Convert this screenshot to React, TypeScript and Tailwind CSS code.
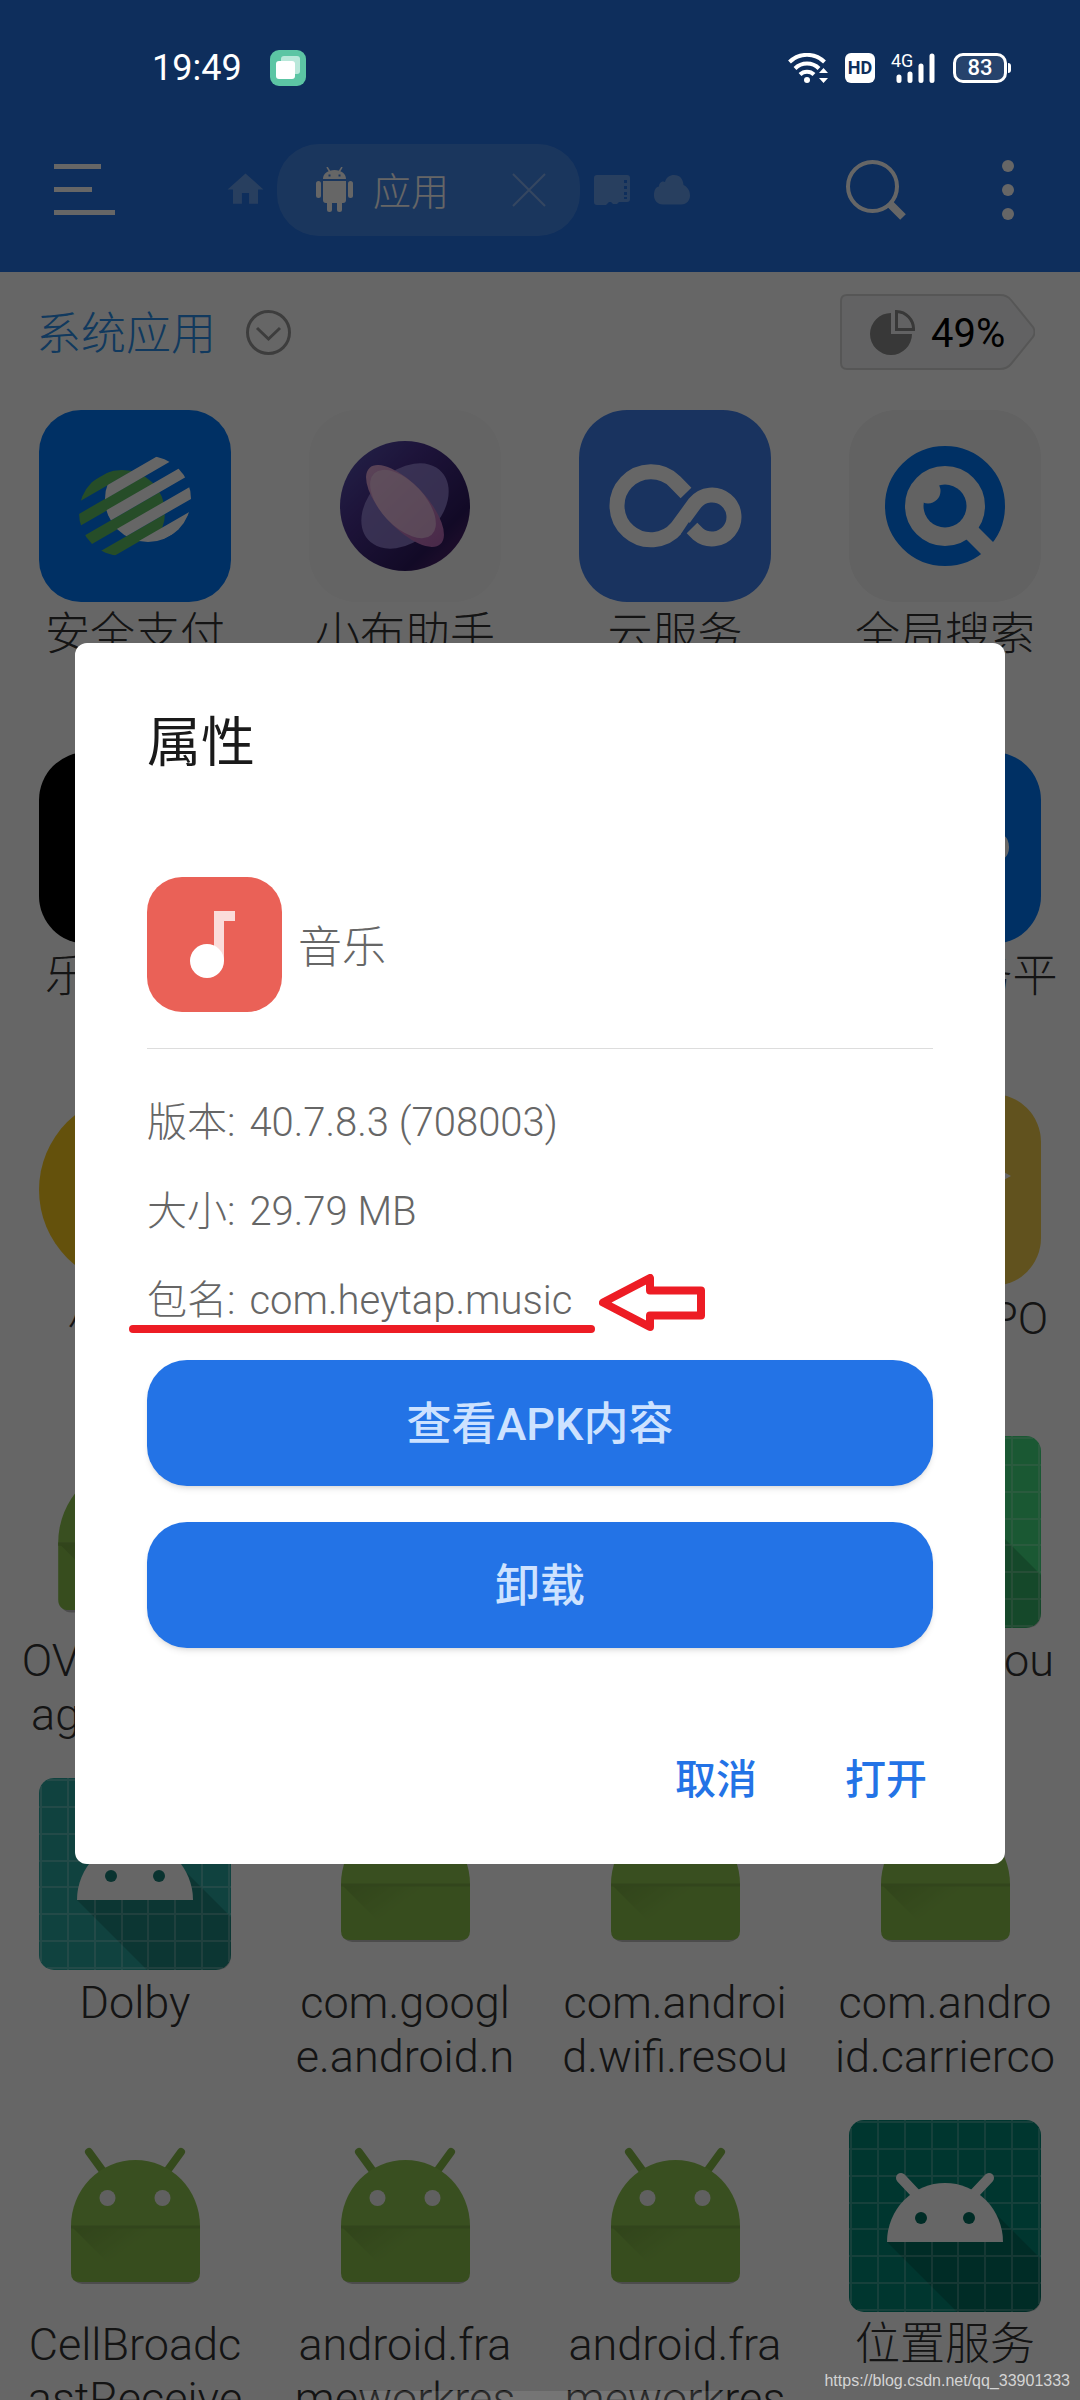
import React from 'react';
import { MdHome } from 'react-icons/md';

type TileProps = {
  name: string;
  icon: React.ReactNode;
};

const PayIcon: React.FC = () => (
  <svg viewBox="0 0 192 192" className="size-full">
    <clipPath id="pay-green"><circle cx="83" cy="103" r="43" /></clipPath>
    <clipPath id="pay-white"><circle cx="109" cy="89" r="43" /></clipPath>
    <rect width="192" height="192" rx="42" fill="#0078fa" />
    <g clipPath="url(#pay-green)">
      <g transform="rotate(-30)" stroke="#60c065" strokeWidth="11">
        <path d="M-60 94H62M-60 115.500H140M-60 137H140M-60 158.500H140" />
      </g>
    </g>
    <g clipPath="url(#pay-white)">
      <g transform="rotate(-30)" stroke="#fff" strokeWidth="11">
        <path d="M-60 104.700H140M-60 126H140M-60 147.500H140M20 169H140" />
      </g>
    </g>
  </svg>
);

const AssistantIcon: React.FC = () => (
  <svg viewBox="0 0 192 192" className="size-full">
    <defs>
      <linearGradient id="orb" x1="0" y1="0" x2="1" y2="1">
        <stop offset="0" stopColor="#5a58b8" />
        <stop offset="0.35" stopColor="#4a3290" />
        <stop offset="0.75" stopColor="#2e1a60" />
        <stop offset="1" stopColor="#6a2a78" />
      </linearGradient>
      <linearGradient id="petal" x1="0" y1="0" x2="1" y2="0">
        <stop offset="0" stopColor="#e0a8d8" />
        <stop offset="1" stopColor="#b868b8" />
      </linearGradient>
    </defs>
    <rect width="192" height="192" rx="48" fill="#f9f9f9" />
    <circle cx="96" cy="96" r="65" fill="url(#orb)" />
    <ellipse cx="96" cy="96" rx="50" ry="35" transform="rotate(-43 96 96)" fill="#a493e6" fillOpacity="0.75" />
    <ellipse cx="96" cy="96" rx="52" ry="22" transform="rotate(47 96 96)" fill="url(#petal)" />
    <ellipse cx="94" cy="94" rx="42" ry="22" transform="rotate(47 94 94)" fill="#f4d2ec" fillOpacity="0.65" />
  </svg>
);

const CloudServiceIcon: React.FC = () => (
  <svg viewBox="0 0 192 192" className="size-full">
    <rect width="192" height="192" rx="48" fill="#3f80ee" />
    <path
      d="M107 83L96 71.700A34 34 0 1 0 98 117.700L116 93A22 22 0 1 1 119 124L113 118"
      fill="none"
      stroke="#fff"
      strokeWidth="15"
      strokeLinejoin="round"
    />
    <path d="M103 125L111 113" stroke="#3f80ee" strokeWidth="3" />
  </svg>
);

const GlobalSearchIcon: React.FC = () => (
  <svg viewBox="0 0 192 192" className="size-full">
    <rect width="192" height="192" rx="48" fill="#f4f4f4" />
    <circle cx="96" cy="96" r="50" fill="none" stroke="#0078fa" strokeWidth="20" />
    <path d="M122 122L150 150" stroke="#f4f4f4" strokeWidth="17" />
    <circle cx="96" cy="96" r="21.500" fill="#0078fa" />
    <circle cx="79" cy="81" r="12.500" fill="#f4f4f4" />
  </svg>
);

const PlainIcon: React.FC<{ color: string; radius?: number; mark?: string }> = ({ color, radius = 48, mark }) => (
  <svg viewBox="0 0 192 192" className="size-full">
    <rect width="192" height="192" rx={radius} fill={color} />
    {mark && <path d={mark} fill="#fff" />}
  </svg>
);

const DefaultAppIcon: React.FC<{ large?: boolean }> = ({ large }) => (
  <svg viewBox={large ? '16 17 160 160' : '0 0 192 192'} className="size-full">
    <defs>
      <linearGradient id="droid-fold" x1="0" y1="0" x2="1" y2="0.6">
        <stop offset="0" stopColor="#000" stopOpacity="0.12" />
        <stop offset="0.5" stopColor="#000" stopOpacity="0" />
      </linearGradient>
    </defs>
    <rect x="33" y="110" width="127" height="54" rx="10" fill="#000" fillOpacity="0.25" />
    <path d="M50 32L66 54M142 32L126 54" stroke="#84b84a" strokeWidth="8" strokeLinecap="round" />
    <path d="M32 106A64.500 66 0 0 1 161 106Z" fill="#8fc650" />
    <path d="M32 106H161V153Q161 162 152 162H41Q32 162 32 153Z" fill="#8ac04c" />
    <path d="M32 106L88 162H152Q161 162 161 153V106Z" fill="url(#droid-fold)" />
    <path d="M32 107H161" stroke="#7dad46" strokeWidth="3" />
    <circle cx="68.500" cy="78" r="8" fill="#f0f0f0" />
    <circle cx="123.500" cy="78" r="8" fill="#f0f0f0" />
  </svg>
);

const GridAppIcon: React.FC<{ color: string; eye: string }> = ({ color, eye }) => (
  <svg viewBox="0 0 192 192" className="size-full">
    <rect width="192" height="192" rx="15" fill={color} />
    <path d="M38 122L108 192H177Q192 192 192 177V139L147 94L153 122Z" fill="#000" fillOpacity="0.18" />
    <path
      d="M2 8V184M29 0V192M56 0V192M83 0V192M109 0V192M136 0V192M163 0V192M190 8V184M8 2H184M0 29H192M0 56H192M0 83H192M0 109H192M0 136H192M0 163H192M8 190H184"
      stroke="#fff"
      strokeOpacity="0.22"
      strokeWidth="2"
    />
    <path d="M52 58L68 75M140 58L124 75" stroke="#fff" strokeWidth="10" strokeLinecap="round" />
    <path d="M38 122A58 59 0 0 1 154 122Z" fill="#fff" />
    <circle cx="72" cy="98" r="6" fill={eye} />
    <circle cx="120" cy="98" r="6" fill={eye} />
  </svg>
);

const apps: TileProps[] = [
  { name: '安全支付', icon: <PayIcon /> },
  { name: '小布助手', icon: <AssistantIcon /> },
  { name: '云服务', icon: <CloudServiceIcon /> },
  { name: '全局搜索', icon: <GlobalSearchIcon /> },
  { name: '乐划锁屏', icon: <PlainIcon color="#000" /> },
  { name: '', icon: <DefaultAppIcon /> },
  { name: '', icon: <DefaultAppIcon /> },
  { name: '系统服务平', icon: <PlainIcon color="#0078fa" mark="M140 78Q160 80 160 95Q160 110 140 112Z" /> },
  { name: '小游戏', icon: <PlainIcon color="#facb20" radius={96} /> },
  { name: '', icon: <DefaultAppIcon /> },
  { name: '', icon: <DefaultAppIcon /> },
  { name: '我的OPPO', icon: <PlainIcon color="#f2cd4b" mark="M140 70L162 82L140 94Z" /> },
  { name: 'OVoiceMan\nagerServic', icon: <DefaultAppIcon large /> },
  { name: '', icon: <DefaultAppIcon /> },
  { name: '', icon: <DefaultAppIcon /> },
  { name: 'com.heyou', icon: <GridAppIcon color="#41dc80" eye="#2aa860" /> },
  { name: 'Dolby', icon: <GridAppIcon color="#28a59e" eye="#1b7f79" /> },
  { name: 'com.googl\ne.android.n', icon: <DefaultAppIcon /> },
  { name: 'com.androi\nd.wifi.resou', icon: <DefaultAppIcon /> },
  { name: 'com.andro\nid.carrierco', icon: <DefaultAppIcon /> },
  { name: 'CellBroadc\nastReceive', icon: <DefaultAppIcon /> },
  { name: 'android.fra\nmeworkres', icon: <DefaultAppIcon /> },
  { name: 'android.fra\nmeworkres', icon: <DefaultAppIcon /> },
  { name: '位置服务', icon: <GridAppIcon color="#008776" eye="#006e60" /> },
];

const AppTile: React.FC<TileProps> = ({ name, icon }) => (
  <button className="flex flex-col items-center gap-1.5">
    <span className="block size-[192px]">{icon}</span>
    <span className="whitespace-pre text-center text-[45px] leading-[54px] font-light text-[#333]">{name}</span>
  </button>
);

const StatusBar: React.FC = () => (
  <div className="absolute inset-x-0 top-0 z-20 flex h-[107px] items-center justify-between pt-[30px] pr-[73px] pb-[1px] pl-[152px] text-white">
    <div className="flex items-center gap-7">
      <span className="text-[36px] leading-[40px]">19:49</span>
      <svg viewBox="0 0 36 36" className="size-9">
        <rect width="36" height="36" rx="9" fill="#5cc5a4" />
        <rect x="11" y="6" width="19" height="18" rx="3" fill="#b9e8da" />
        <rect x="6" y="11" width="19" height="18" rx="3" fill="#fff" />
      </svg>
    </div>
    <div className="flex items-center gap-4">
      <svg viewBox="0 0 41 30" className="h-[30px] w-[41px]" fill="none" stroke="#fff">
        <path d="M1.500 9A25 25 0 0 1 36.500 9" strokeWidth="4" />
        <path d="M7 15.500A17 17 0 0 1 31 15.500" strokeWidth="4" />
        <path d="M12 21.500A10 10 0 0 1 26 21.500" strokeWidth="4" />
        <circle cx="19" cy="27" r="3" fill="#fff" stroke="none" />
        <path d="M31 20L35.500 15L40 20ZM31 25L35.500 30L40 25Z" fill="#fff" stroke="none" />
      </svg>
      <span className="flex h-[30px] w-[30px] items-center justify-center rounded-[6px] bg-white text-[18px] leading-[30px] font-bold text-[#0e2e5c]">HD</span>
      <span className="relative block h-[30px] w-[46px]">
        <svg viewBox="0 0 46 30" className="size-full" stroke="#fff" strokeWidth="5" strokeLinecap="round">
          <path d="M8 24V27.500M19 21V27.500M30 13V27.500M41 3V27.500" />
        </svg>
        <span className="absolute top-0 left-0 text-[18px] leading-[16px]">4G</span>
      </span>
      <span className="relative flex h-[30px] w-[54px] items-center justify-center rounded-[10px] border-[3px] border-white bg-white/10 text-[22px] leading-[24px] font-medium">
        83
        <span className="absolute -right-[7px] h-[10px] w-[3px] rounded-r bg-white" />
      </span>
    </div>
  </div>
);

const Toolbar: React.FC = () => (
  <header className="bg-[#2373e6] pt-[107px] text-white">
    <div className="flex h-[165px] items-center pr-[60px] pl-[54px]">
      <button aria-label="菜单" className="flex w-[61px] flex-col gap-[18px]">
        <span className="h-[5px] w-[47px] bg-white" />
        <span className="h-[5px] w-[38px] bg-white" />
        <span className="h-[5px] w-[61px] bg-white" />
      </button>
      <nav className="ml-[109px] flex items-center">
        <a href="#home" aria-label="主页"><MdHome size={43} className="text-white/30" /></a>
        <div className="ml-[10px] flex h-[92px] w-[303px] items-center rounded-[42px] bg-white/15 pr-[34px] pl-[39px]">
          <svg viewBox="0 0 37 45" className="h-[45px] w-[37px]" fill="#fff" fillRule="evenodd">
            <path d="M11 0L14 5M26 0L23 5" stroke="#fff" strokeWidth="1.500" />
            <path d="M7 12C7 6.500 12 3 18.500 3S30 6.500 30 12ZM12.500 7.500V9.500H14.500V7.500ZM22.500 7.500V9.500H24.500V7.500Z" />
            <path d="M7 14H30V33Q30 36 27 36H26V42.500A2.500 2.500 0 0 1 21 42.500V36H16V42.500A2.500 2.500 0 0 1 11 42.500V36H10Q7 36 7 33Z" />
            <rect x="0" y="14" width="5" height="17" rx="2.500" />
            <rect x="32" y="14" width="5" height="17" rx="2.500" />
          </svg>
          <span className="ml-5 pt-1 text-[38px] leading-[48px] font-light">应用</span>
          <button aria-label="关闭" className="ml-auto">
            <svg viewBox="0 0 34 34" className="size-[34px]" stroke="#fff" strokeOpacity="0.35" strokeWidth="2">
              <path d="M1 1L33 33M33 1L1 33" />
            </svg>
          </button>
        </div>
        <a href="#storage" aria-label="存储" className="ml-[14px]">
          <svg viewBox="0 0 36 30" className="h-[30px] w-9" fill="#fff" fillOpacity="0.3" fillRule="evenodd">
            <path d="M3 0H33Q36 0 36 3V24Q36 27 33 27H25L23 29H19L17 27H15L12 30H3Q0 30 0 27V3Q0 0 3 0ZM30 5V8H33V5ZM30 11V14H33V11ZM30 17V20H33V17ZM30 22V24H33V22Z" />
          </svg>
        </a>
        <a href="#cloud" aria-label="云" className="ml-6">
          <svg viewBox="0 0 36 30" className="h-[30px] w-9" fill="#fff" fillOpacity="0.3">
            <path d="M9 29.500C3 29.500 0 25 0 20.500C0 15 2 11.500 5 11.500C5 7 9 5.500 11 7C12 2.500 16 0 20 0C26 0 29 4 29.500 10C33.500 12 36 15.500 36 20.500C36 25 33 29.500 27 29.500Z" />
          </svg>
        </a>
      </nav>
      <div className="ml-auto flex items-center gap-[90px]">
        <button aria-label="搜索">
          <svg viewBox="0 0 60 60" className="size-[60px]" fill="none" stroke="#fff">
            <circle cx="26.500" cy="26.500" r="24.500" strokeWidth="4" />
            <path d="M43 43L57 57" strokeWidth="8" />
          </svg>
        </button>
        <button aria-label="更多" className="flex w-[24px] flex-col items-center gap-3">
          <span className="size-3 rounded-full bg-white" />
          <span className="size-3 rounded-full bg-white" />
          <span className="size-3 rounded-full bg-white" />
        </button>
      </div>
    </div>
  </header>
);

const CategoryBar: React.FC = () => (
  <div className="mb-[18px] flex h-[120px] items-center justify-between pr-[45px] pl-9">
    <button className="flex items-center gap-[30px] text-[45px] leading-[60px] font-light text-[#2b90ea]">
      <span className="pt-1.5">系统应用</span>
      <svg viewBox="0 0 45 45" className="size-[45px]" fill="none" stroke="#999" strokeWidth="3">
        <circle cx="22.500" cy="22.500" r="21" />
        <path d="M11 18L22.500 29L34 18" strokeWidth="3" />
      </svg>
    </button>
    <div className="relative flex h-[76px] w-[195px] items-center gap-4 pl-[30px]">
      <svg viewBox="0 0 195 76" className="absolute inset-0 size-full">
        <path
          d="M7 1H160Q167 1 171 6L193 33Q196 38 193 43L171 70Q167 75 160 75H7Q1 75 1 69V7Q1 1 7 1Z"
          fill="#f5f6f7"
          stroke="#d8d8d8"
          strokeWidth="2"
        />
      </svg>
      <svg viewBox="0 0 45 45" className="relative size-[45px]">
        <path d="M21 3V24H42A21 21 0 1 1 21 3Z" fill="#8c8c8c" />
        <path d="M26.500 1.500V19.500H43.500A17.500 17.500 0 0 0 26.500 1.500Z" fill="none" stroke="#8c8c8c" strokeWidth="3" />
      </svg>
      <span className="relative pt-1 text-[40px] leading-[48px] text-black">49%</span>
    </div>
  </div>
);

const InfoRow: React.FC<{ label: string; value: string; children?: React.ReactNode }> = ({ label, value, children }) => (
  <div className="relative flex gap-[14px]">
    <dt>{label}:</dt>
    <dd>{value}</dd>
    {children}
  </div>
);

const PropertiesDialog: React.FC = () => (
  <div className="absolute inset-0 z-10 flex items-center justify-center bg-black/60 px-[75px] pt-[107px]">
    <section role="dialog" aria-labelledby="dialog-title" className="w-full rounded-[12px] bg-white px-[72px] pt-[65px] pb-[54px]">
      <h1 id="dialog-title" className="text-[54px] leading-[72px] font-normal text-[#1a1a1a]">属性</h1>
      <div className="mt-[97px] flex items-center gap-4 border-b border-[#ddd] pb-9">
        <svg viewBox="0 0 135 135" className="size-[135px]">
          <rect width="135" height="135" rx="35" fill="#ea6157" />
          <path d="M67 34H88V44H77V84H67Z" fill="#fbdcda" />
          <circle cx="60" cy="84" r="17" fill="#fff" />
        </svg>
        <span className="pt-1.5 text-[44px] leading-[60px] font-light text-[#666]">音乐</span>
      </div>
      <dl className="mt-11 flex flex-col gap-[29px] text-[40px] leading-[60px] font-light text-[#666]">
        <InfoRow label="版本" value="40.7.8.3 (708003)" />
        <InfoRow label="大小" value="29.79 MB" />
        <InfoRow label="包名" value="com.heytap.music">
          <span className="absolute top-[54px] -left-[18px] h-2 w-[466px] rounded-full bg-[#ed1c24]" />
          <svg viewBox="0 0 107 57" className="absolute top-[3px] left-[452px] h-[57px] w-[107px]">
            <path
              d="M4 28.500L51 4V16.500H102V41.500H51V53Z"
              fill="#fff"
              stroke="#ed1c24"
              strokeWidth="8"
              strokeLinejoin="round"
            />
          </svg>
        </InfoRow>
      </dl>
      <div className="mt-[29px] flex flex-col gap-9 text-[45px] font-medium text-[#cde2ff]">
        <button className="h-[126px] rounded-[40px] bg-[#2373e6] pt-1 shadow-md">查看APK内容</button>
        <button className="h-[126px] rounded-[40px] bg-[#2373e6] pt-1 shadow-md">卸载</button>
      </div>
      <div className="mt-[102px] flex justify-end gap-[88px] pr-[6px] text-[41px] leading-[60px] font-medium text-[#2373e6]">
        <button>取消</button>
        <button>打开</button>
      </div>
    </section>
  </div>
);

const App: React.FC = () => {
  return (
    <div className="relative h-screen overflow-hidden bg-white font-['Roboto','Noto_Sans_CJK_SC',sans-serif]">
      <StatusBar />
      <Toolbar />
      <main>
        <CategoryBar />
        <div className="grid auto-rows-[342px] grid-cols-4 items-start">
          {apps.map((app, i) => (
            <AppTile key={i} name={app.name} icon={app.icon} />
          ))}
        </div>
      </main>
      <PropertiesDialog />
      <div className="absolute bottom-0 left-1/3 z-20 h-[9px] w-1/3 bg-white/10" />
      <a
        href="https://blog.csdn.net/qq_33901333"
        className="absolute right-[10px] bottom-[7px] z-20 font-['Liberation_Sans',Arial,sans-serif] text-[16px] leading-[24px] text-[#d4d4d4]"
      >
        https://blog.csdn.net/qq_33901333
      </a>
    </div>
  );
};

export default App;
